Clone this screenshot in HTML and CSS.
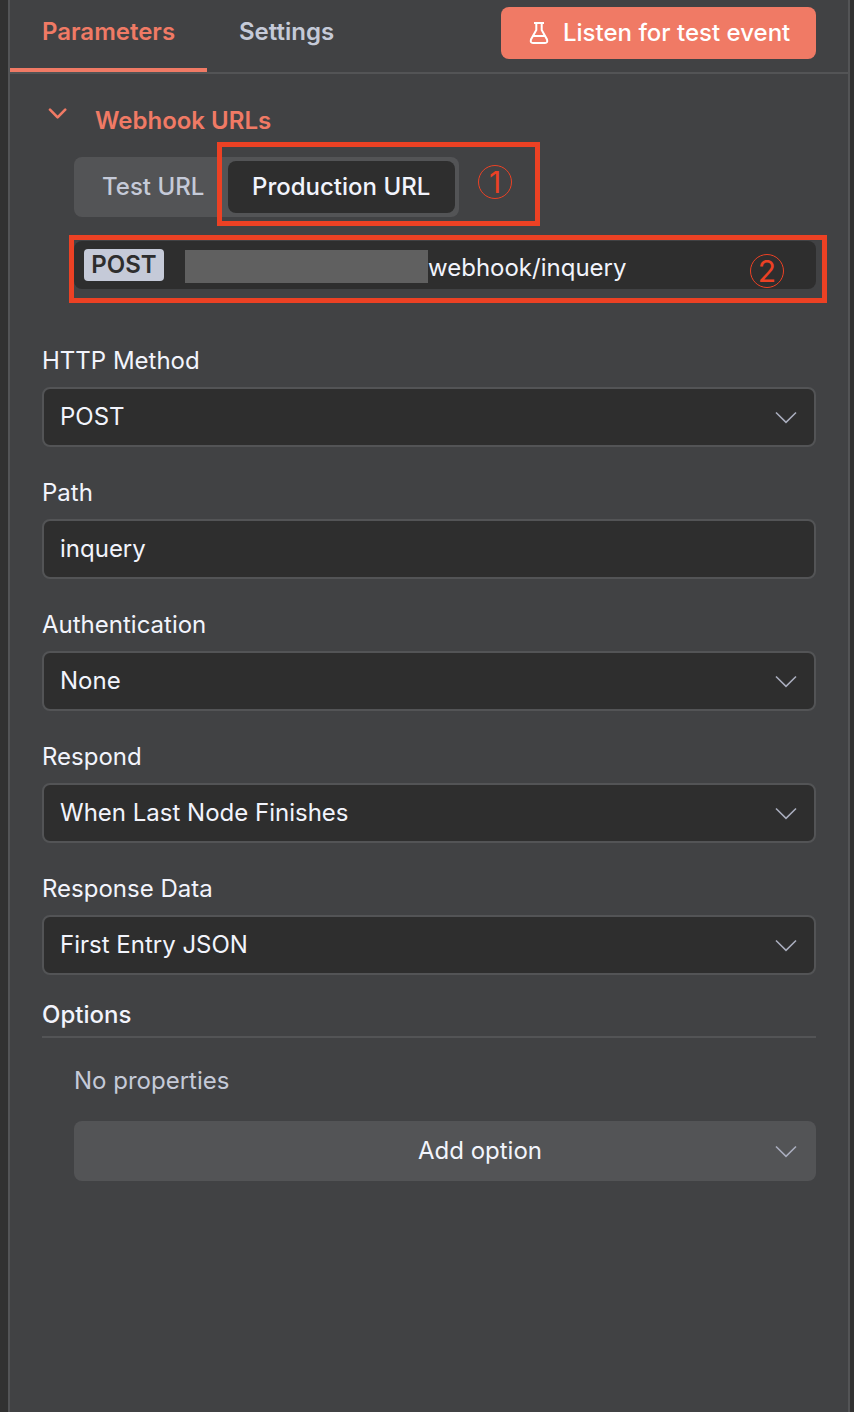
FILE: index.html
```html
<!DOCTYPE html>
<html lang="en">
<head>
<meta charset="utf-8">
<title>Webhook</title>
<link rel="stylesheet" href="styles.css">
</head>
<body>
<main class="panel">
  <header class="header">
    <nav class="tabs">
      <a class="tab tab-active">Parameters</a>
      <a class="tab">Settings</a>
    </nav>
    <button class="listen">
      <svg class="flask" width="20" height="24" viewBox="0 0 20 24" fill="none" stroke="#fff" stroke-width="2"><path d="M5 2H15M7.3 2V9L2 18.500Q1 22 4 22H16Q19 22 18 18.500L12.700 9V2M4.500 15H15.500"/></svg>
      <span>Listen for test event</span>
    </button>
  </header>

  <section class="webhook">
    <div class="webhook-title">
      <svg class="toggle" width="20" height="12" viewBox="0 0 20 12" fill="none" stroke="#f07a65" stroke-width="2.600" stroke-linecap="round" stroke-linejoin="round"><path d="M2 1.700L9.600 9.400L17.200 1.700"/></svg>
      <span>Webhook URLs</span>
    </div>
    <div class="url-tabs">
      <span class="url-tab">Test URL</span>
      <span class="url-tab url-tab-active">Production URL</span>
    </div>
    <div class="url">
      <span class="badge">POST</span>
      <span class="mask"></span>
      <span class="url-text">webhook/inquery</span>
    </div>
    <div class="mark mark-one"><span class="num">1</span></div>
    <div class="mark mark-two"><span class="num">2</span></div>
  </section>

  <section class="fields">
    <div class="field"><label class="label">HTTP Method</label><div class="input"><span>POST</span><svg class="chev" width="22" height="13" viewBox="0 0 22 13"><path d="M1 1.500L11 11.300L21 1.500"/></svg></div></div>
    <div class="field"><label class="label">Path</label><div class="input"><span>inquery</span></div></div>
    <div class="field"><label class="label">Authentication</label><div class="input"><span>None</span><svg class="chev" width="22" height="13" viewBox="0 0 22 13"><path d="M1 1.500L11 11.300L21 1.500"/></svg></div></div>
    <div class="field"><label class="label">Respond</label><div class="input"><span>When Last Node Finishes</span><svg class="chev" width="22" height="13" viewBox="0 0 22 13"><path d="M1 1.500L11 11.300L21 1.500"/></svg></div></div>
    <div class="field"><label class="label">Response Data</label><div class="input"><span>First Entry JSON</span><svg class="chev" width="22" height="13" viewBox="0 0 22 13"><path d="M1 1.500L11 11.300L21 1.500"/></svg></div></div>
  </section>

  <section class="options">
    <h2 class="options-title">Options</h2>
    <p class="empty">No properties</p>
    <div class="add"><span class="add-text">Add option</span><svg class="chev" width="22" height="13" viewBox="0 0 22 13"><path d="M1 1.500L11 11.300L21 1.500"/></svg></div>
  </section>
</main>
</body>
</html>
```
FILE: styles.css
```css
* { box-sizing: border-box; }
body {
  margin: 0;
  padding: 0 4px 0 8px;
  background: #313131;
  color: #f2f4fc;
  font: 400 24px/32px Inter, sans-serif;
}
.panel {
  height: 1412px;
  background: #414244;
  border: solid #535456;
  border-width: 0 2px;
}
.header {
  display: flex;
  justify-content: space-between;
  height: 74px;
  padding-right: 32px;
  border-bottom: 2px solid #535456;
}
.tabs { display: flex; }
.tab {
  height: 72px;
  padding: 16px 32px 0;
  color: #c5cad8;
  font-weight: 600;
}
.tab-active {
  width: 197px;
  color: #f07a65;
  border-bottom: 4px solid #f07a65;
}
.listen {
  display: flex;
  align-items: center;
  gap: 14px;
  width: 315px;
  height: 52px;
  margin: 7px 0 0;
  padding: 0 0 0 28px;
  border: 0;
  border-radius: 8px;
  background: #f07a65;
  color: #fff;
  font: 500 24px/32px Inter, sans-serif;
}
.webhook {
  position: relative;
  padding: 31px 32px 0 64px;
}
.webhook-title {
  display: flex;
  gap: 27px;
  height: 52px;
  margin-left: -26px;
  color: #f07a65;
  font-weight: 600;
}
.toggle { margin-top: 3px; }
.url-tabs {
  display: flex;
  width: 385px;
  height: 60px;
  padding: 4px;
  border-radius: 8px;
  background: #535456;
}
.url-tab {
  width: 150px;
  height: 52px;
  padding: 10px 0 0 24px;
  color: #c5cad8;
  font-weight: 500;
  white-space: nowrap;
}
.url-tab-active {
  width: 227px;
  border-radius: 8px;
  background: #2e2e2e;
  color: #f2f4fc;
}
.url {
  display: flex;
  align-items: center;
  height: 48px;
  margin-top: 24px;
  padding-left: 10px;
  border-radius: 8px;
  background: #2e2e2e;
}
.badge {
  width: 80px;
  height: 32px;
  border-radius: 4px;
  background: #c5cad8;
  color: #2e2e2e;
  font-weight: 600;
  text-align: center;
}
.mask {
  width: 243px;
  height: 33px;
  margin: 3px 0 0 21px;
  background: #606060;
}
.url-text { margin-top: 5px; }
.mark {
  position: absolute;
  border: 5px solid #ec4124;
  color: #ec4124;
}
.mark-one { left: 207px; top: 68px; width: 323px; height: 84px; }
.mark-two { left: 59px; top: 161px; width: 758px; height: 68px; }
.num {
  position: absolute;
  width: 34px;
  height: 34px;
  border: 1.5px solid #ec4124;
  border-radius: 50%;
  font: 400 30px/32px Inter, sans-serif;
  text-align: center;
}
.mark-one .num { left: 256px; top: 18px; }
.mark-two .num { left: 676px; top: 14px; }
.fields {
  display: flex;
  flex-direction: column;
  gap: 30px;
  padding: 56px 32px 0;
}
.label {
  display: block;
  height: 42px;
}
.input {
  display: flex;
  align-items: center;
  justify-content: space-between;
  height: 60px;
  padding: 0 17px 0 16px;
  border: 2px solid #535456;
  border-radius: 8px;
  background: #2e2e2e;
}
.chev {
  fill: none;
  stroke: #a9adbd;
  stroke-width: 1.6;
}
.options { padding: 24px 32px 0; }
.options-title {
  height: 39px;
  margin: 0;
  border-bottom: 2px solid #535456;
  font: 500 24px/32px Inter, sans-serif;
}
.empty {
  margin: 27px 0 24px 32px;
  color: #c5cad8;
}
.add {
  display: flex;
  align-items: center;
  height: 60px;
  margin-left: 32px;
  padding: 0 19px 0 111px;
  border-radius: 8px;
  background: #535456;
}
.add-text {
  flex: 1;
  text-align: center;
}
```
